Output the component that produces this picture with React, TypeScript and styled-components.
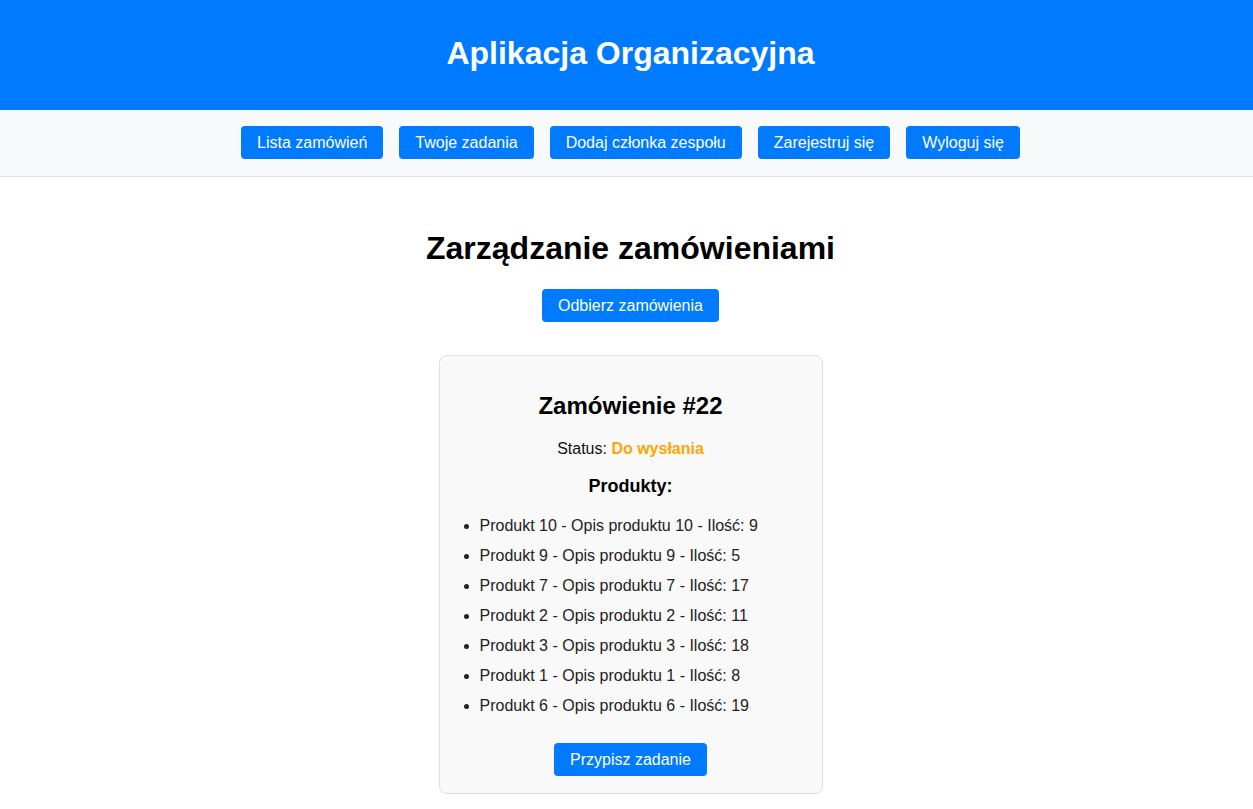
import React from "react";
import styled, { createGlobalStyle } from "styled-components";

const GlobalStyle = createGlobalStyle`
  html, body {
    margin: 0;
    padding: 0;
    overflow-x: hidden;
    background: #ffffff;
    font-family: "Liberation Sans", Arial, sans-serif;
    color: #000;
  }
`;

const Page = styled.div`
  width: calc(100% + 8px);
  display: flex;
  flex-direction: column;
`;

const Header = styled.header`
  background: #007bff;
  height: 110px;
  display: flex;
  align-items: center;
  justify-content: center;
`;

const AppTitle = styled.h1`
  margin: 0 0 4px;
  color: #ffffff;
  font-size: 32px;
  font-weight: bold;
  line-height: 37px;
`;

const Nav = styled.nav`
  background: #f8f9fa;
  border-bottom: 1px solid #dddddd;
  padding: 16px 0 17px;
  display: flex;
  justify-content: center;
  gap: 16px;
`;

const Button = styled.button`
  background: #007bff;
  color: #ffffff;
  border: none;
  border-radius: 4px;
  font-family: "Liberation Sans", Arial, sans-serif;
  font-size: 16px;
  line-height: 19px;
  padding: 7px 16px;
  cursor: pointer;
`;

const Main = styled.main`
  display: flex;
  flex-direction: column;
  align-items: center;
  padding-top: 53px;
`;

const PageTitle = styled.h2`
  margin: 0 0 22px;
  font-size: 32px;
  line-height: 37px;
  font-weight: bold;
`;

const Card = styled.section`
  margin-top: 33px;
  width: 342px;
  background: #f9f9f9;
  border: 1px solid #dddddd;
  border-radius: 8px;
  padding: 20px 20px 17px;
  display: flex;
  flex-direction: column;
  align-items: center;
`;

const OrderTitle = styled.h3`
  margin: 16px 0 0;
  font-size: 24px;
  line-height: 28px;
  font-weight: bold;
`;

const StatusLine = styled.p`
  margin: 20px 0 0;
  font-size: 16px;
  line-height: 18px;
  color: #111;
`;

const StatusValue = styled.span<{ $color: string }>`
  color: ${(p) => p.$color};
  font-weight: bold;
`;

const ProductsTitle = styled.h4`
  margin: 17px 0 0;
  font-size: 18px;
  line-height: 22px;
  font-weight: bold;
`;

const ProductList = styled.ul`
  align-self: stretch;
  margin: 20px 0 0;
  padding-left: 20px;
  display: flex;
  flex-direction: column;
  gap: 12px;
`;

const ProductItem = styled.li`
  font-size: 16px;
  line-height: 18px;
  color: #222;
`;

const AssignButton = styled(Button)`
  margin-top: 28px;
`;

const navItems = [
  "Lista zamówień",
  "Twoje zadania",
  "Dodaj członka zespołu",
  "Zarejestruj się",
  "Wyloguj się",
];

const products = [
  { n: 10, q: 9 },
  { n: 9, q: 5 },
  { n: 7, q: 17 },
  { n: 2, q: 11 },
  { n: 3, q: 18 },
  { n: 1, q: 8 },
  { n: 6, q: 19 },
];

export default function App() {
  return (
    <>
      <GlobalStyle />
      <Page>
        <Header>
          <AppTitle>Aplikacja Organizacyjna</AppTitle>
        </Header>
        <Nav>
          {navItems.map((item) => (
            <Button key={item}>{item}</Button>
          ))}
        </Nav>
        <Main>
          <PageTitle>Zarządzanie zamówieniami</PageTitle>
          <Button>Odbierz zamówienia</Button>
          <Card>
            <OrderTitle>Zamówienie #22</OrderTitle>
            <StatusLine>
              Status: <StatusValue $color="#ffa500">Do wysłania</StatusValue>
            </StatusLine>
            <ProductsTitle>Produkty:</ProductsTitle>
            <ProductList>
              {products.map((p) => (
                <ProductItem key={p.n}>
                  Produkt {p.n} - Opis produktu {p.n} - Ilość: {p.q}
                </ProductItem>
              ))}
            </ProductList>
            <AssignButton>Przypisz zadanie</AssignButton>
          </Card>
        </Main>
      </Page>
    </>
  );
}
